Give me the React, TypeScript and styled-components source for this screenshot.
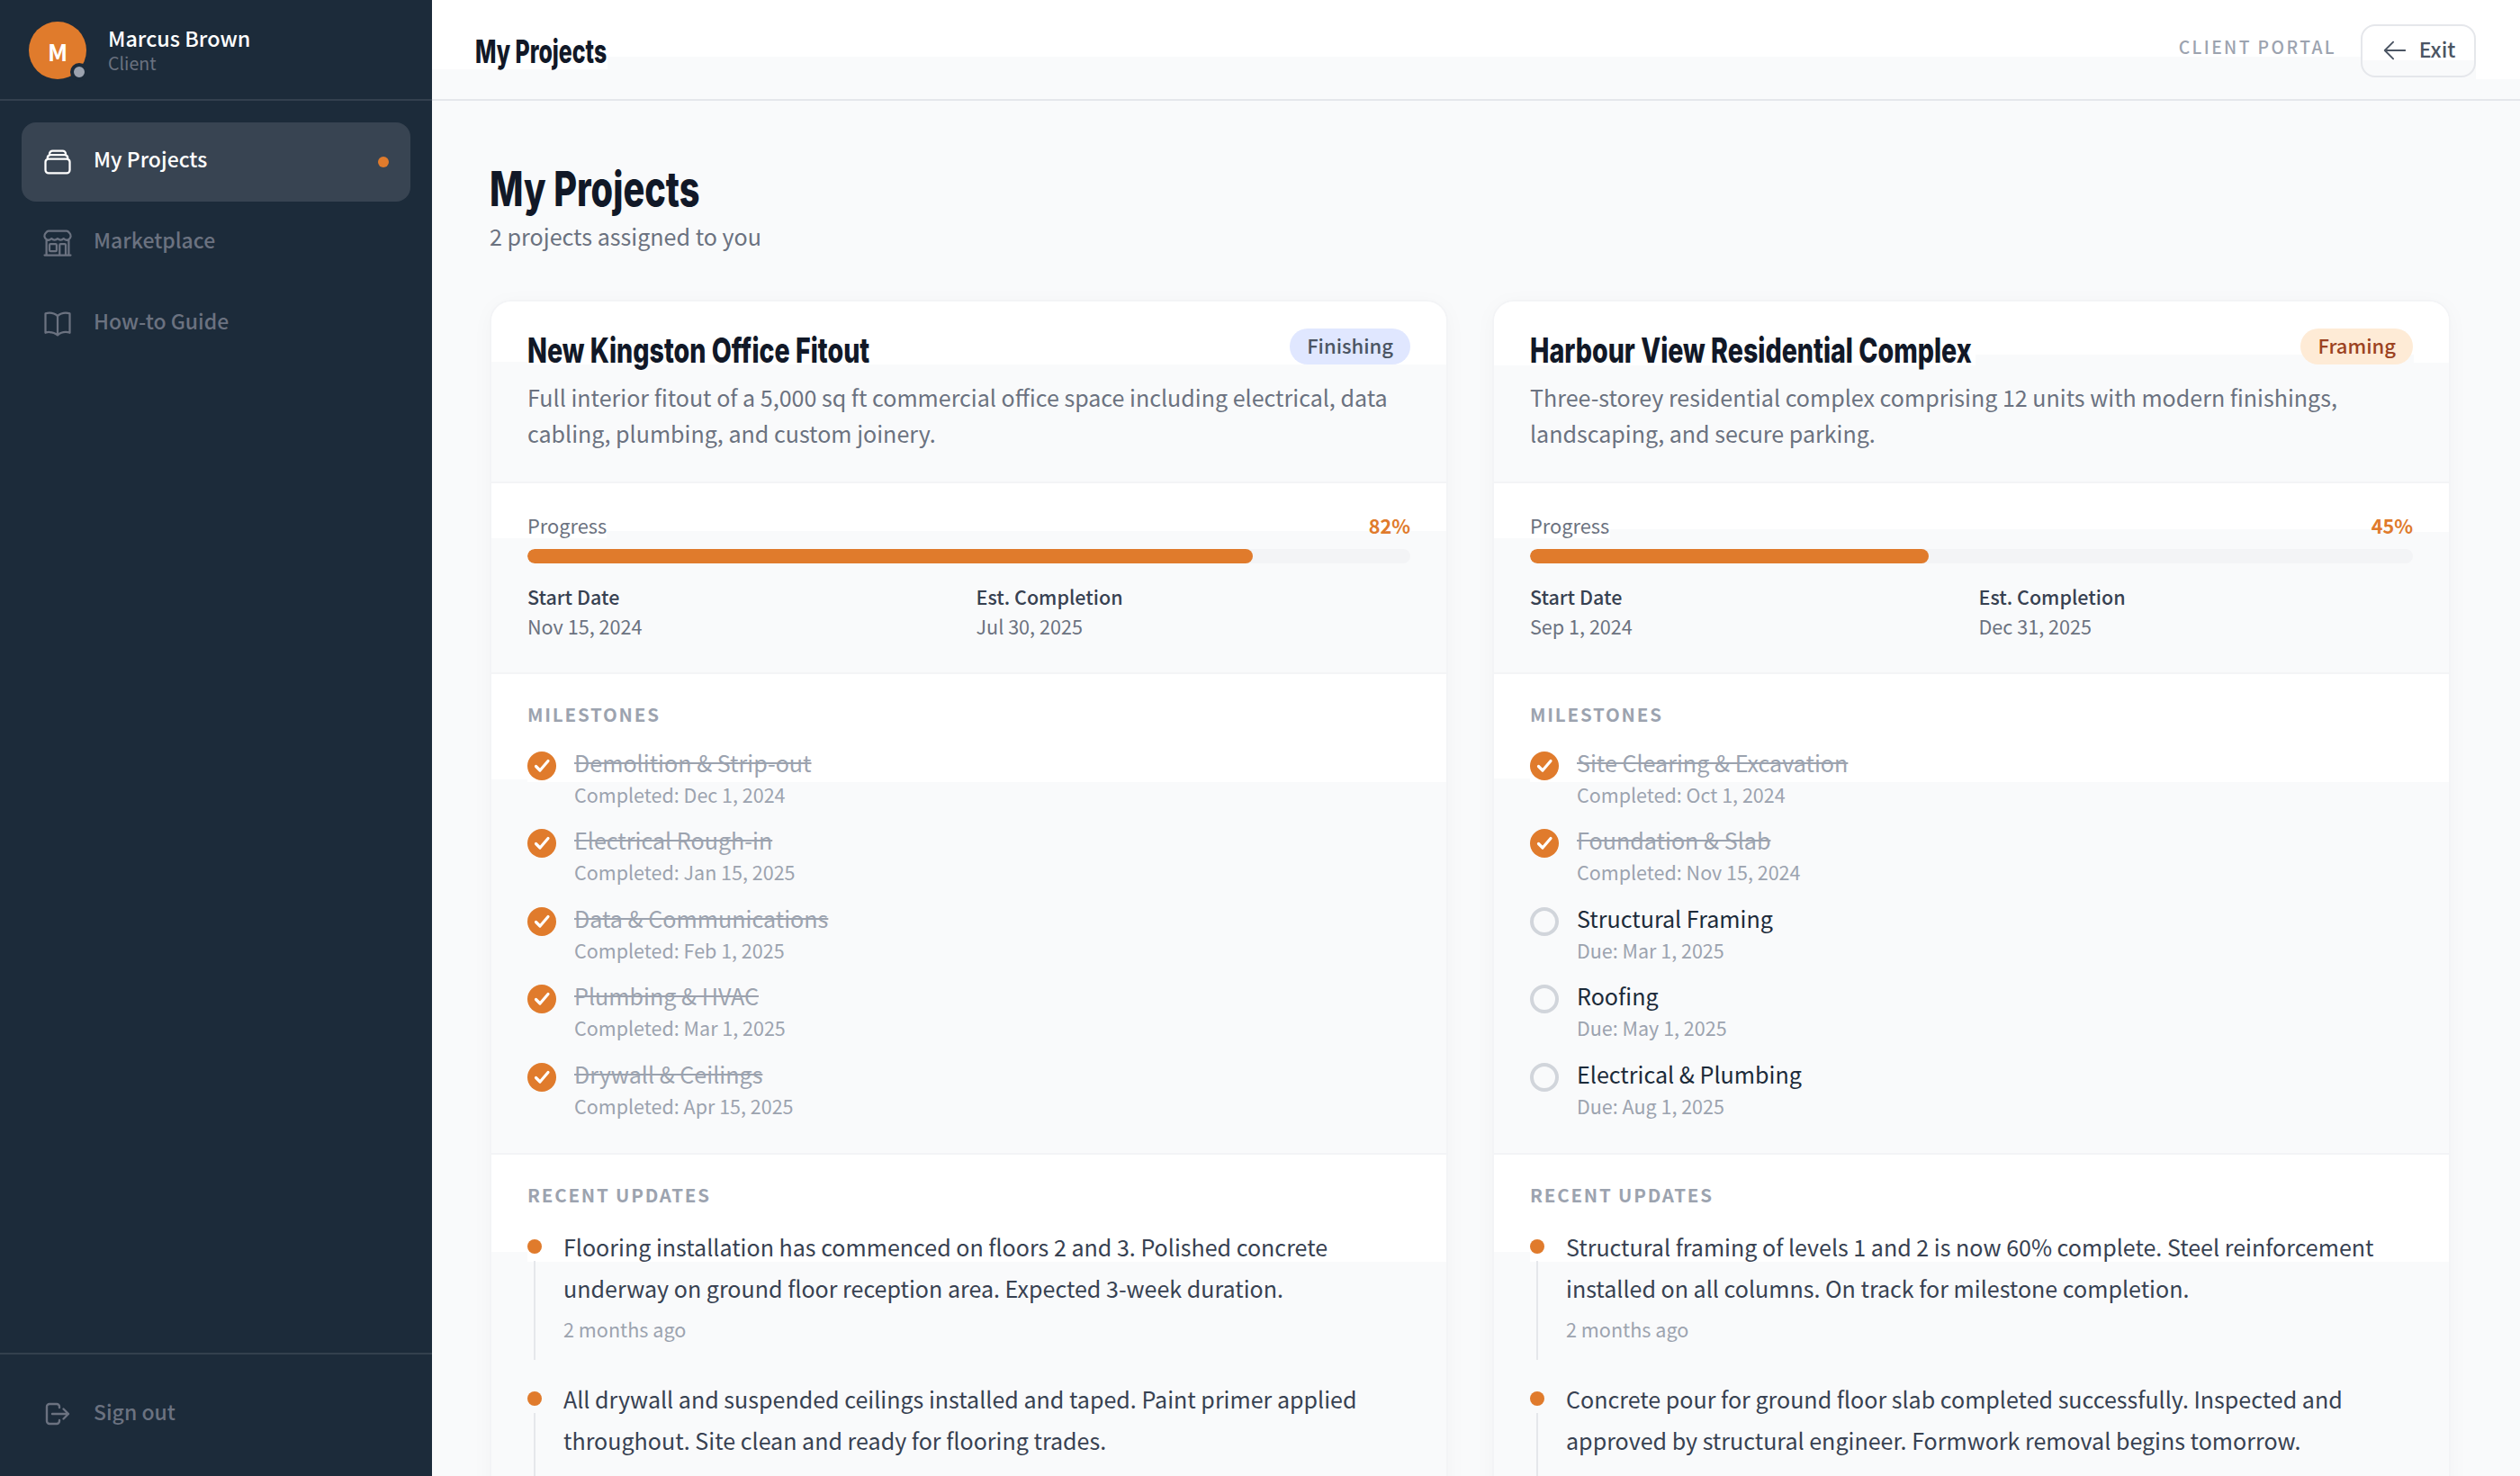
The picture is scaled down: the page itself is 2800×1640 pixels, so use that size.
import React from "react";
import styled, { createGlobalStyle } from "styled-components";
import {
  HiOutlineRectangleStack,
  HiOutlineBuildingStorefront,
  HiOutlineBookOpen,
  HiOutlineArrowLeft,
} from "react-icons/hi2";

// white part of a section, the rest shows the page grey: [left, width, height]
type Band = [number, string, number];

const bandBackground = (bands: Band[]) =>
  bands
    .map(([x, w, h]) => `linear-gradient(#fff, #fff) ${x}px 0 / ${w} ${h}px no-repeat`)
    .join(", ") + ", #f9fafb";

interface Milestone {
  name: string;
  note: string;
  done: boolean;
}

interface Project {
  title: string;
  desc: string;
  stage: string;
  stageBg: string;
  stageFg: string;
  progress: number;
  start: string;
  end: string;
  milestones: Milestone[];
  updates: { text: string; time?: string }[];
  bands: Band[][];
}

const projects: Project[] = [
  {
    title: "New Kingston Office Fitout",
    desc: "Full interior fitout of a 5,000 sq ft commercial office space including electrical, data cabling, plumbing, and custom joinery.",
    stage: "Finishing",
    stageBg: "#e0e7ff",
    stageFg: "#4b5563",
    progress: 82,
    start: "Nov 15, 2024",
    end: "Jul 30, 2025",
    milestones: [
      { name: "Demolition & Strip-out", note: "Completed: Dec 1, 2024", done: true },
      { name: "Electrical Rough-in", note: "Completed: Jan 15, 2025", done: true },
      { name: "Data & Communications", note: "Completed: Feb 1, 2025", done: true },
      { name: "Plumbing & HVAC", note: "Completed: Mar 1, 2025", done: true },
      { name: "Drywall & Ceilings", note: "Completed: Apr 15, 2025", done: true },
    ],
    updates: [
      {
        text: "Flooring installation has commenced on floors 2 and 3. Polished concrete underway on ground floor reception area. Expected 3-week duration.",
        time: "2 months ago",
      },
      {
        text: "All drywall and suspended ceilings installed and taped. Paint primer applied throughout. Site clean and ready for flooring trades.",
      },
    ],
    bands: [
      [[0, "40px", 67], [40, "100%", 70]],
      [[0, "128px", 61], [128, "100%", 53]],
      [[0, "40px", 117], [40, "100%", 120]],
      [[0, "40px", 108], [40, "100%", 119]],
    ],
  },
  {
    title: "Harbour View Residential Complex",
    desc: "Three-storey residential complex comprising 12 units with modern finishings, landscaping, and secure parking.",
    stage: "Framing",
    stageBg: "#feebd6",
    stageFg: "#9c4221",
    progress: 45,
    start: "Sep 1, 2024",
    end: "Dec 31, 2025",
    milestones: [
      { name: "Site Clearing & Excavation", note: "Completed: Oct 1, 2024", done: true },
      { name: "Foundation & Slab", note: "Completed: Nov 15, 2024", done: true },
      { name: "Structural Framing", note: "Due: Mar 1, 2025", done: false },
      { name: "Roofing", note: "Due: May 1, 2025", done: false },
      { name: "Electrical & Plumbing", note: "Due: Aug 1, 2025", done: false },
    ],
    updates: [
      {
        text: "Structural framing of levels 1 and 2 is now 60% complete. Steel reinforcement installed on all columns. On track for milestone completion.",
        time: "2 months ago",
      },
      {
        text: "Concrete pour for ground floor slab completed successfully. Inspected and approved by structural engineer. Formwork removal begins tomorrow.",
      },
    ],
    bands: [
      [[0, "535px", 71], [535, "100%", 59], [1022, "100%", 68]],
      [[0, "129px", 61], [129, "100%", 51], [1022, "100%", 54]],
      [[0, "40px", 116], [40, "100%", 120]],
      [[0, "40px", 108], [40, "100%", 119]],
    ],
  },
];

const navItems = [
  { label: "My Projects", icon: HiOutlineRectangleStack, active: true },
  { label: "Marketplace", icon: HiOutlineBuildingStorefront, active: false },
  { label: "How-to Guide", icon: HiOutlineBookOpen, active: false },
];

const headerBands: Band[] = [
  [0, "195px", 77],
  [195, "100%", 63],
  [2271, "100%", 88],
];

export default function App() {
  return (
    <>
      <GlobalStyle />
      <Shell>
        <Sidebar>
          <UserBlock>
            <Avatar>
              M
              <StatusDot />
            </Avatar>
            <UserText>
              <UserName>Marcus Brown</UserName>
              <UserRole>Client</UserRole>
            </UserText>
          </UserBlock>

          <Nav>
            {navItems.map(({ label, icon: Icon, active }) => (
              <NavItem key={label} $active={active}>
                <Icon size={36} />
                <NavLabel>{label}</NavLabel>
                {active && <NavDot />}
              </NavItem>
            ))}
          </Nav>

          <SignOut>
            <svg width="28" height="26" viewBox="0 0 28 26" fill="none" stroke="currentColor" strokeWidth="2.4" strokeLinecap="round" strokeLinejoin="round">
              <path d="M16 6V5a3 3 0 0 0-3-3H5a3 3 0 0 0-3 3v16a3 3 0 0 0 3 3h8a3 3 0 0 0 3-3v-1" />
              <path d="M8 13h18m-5.500-5.500 5.500 5.500-5.500 5.500" />
            </svg>
            <NavLabel>Sign out</NavLabel>
          </SignOut>
        </Sidebar>

        <Main>
          <TopBar style={{ background: bandBackground(headerBands) }}>
            <TopTitle>My Projects</TopTitle>
            <TopRight>
              <PortalTag>CLIENT PORTAL</PortalTag>
              <ExitButton>
                <HiOutlineArrowLeft size={30} />
                Exit
              </ExitButton>
            </TopRight>
          </TopBar>

          <Content>
            <PageTitle>My Projects</PageTitle>
            <PageSub>2 projects assigned to you</PageSub>

            <CardGrid>
              {projects.map((p) => (
                <Card key={p.title}>
                  <IntroSection style={{ background: bandBackground(p.bands[0]) }}>
                    <CardTop>
                      <CardTitle>{p.title}</CardTitle>
                      <StageBadge $bg={p.stageBg} $fg={p.stageFg}>{p.stage}</StageBadge>
                    </CardTop>
                    <CardDesc>{p.desc}</CardDesc>
                  </IntroSection>

                  <ProgressSection style={{ background: bandBackground(p.bands[1]) }}>
                    <ProgressHead>
                      <ProgressLabel>Progress</ProgressLabel>
                      <ProgressValue>{p.progress}%</ProgressValue>
                    </ProgressHead>
                    <BarTrack>
                      <BarFill style={{ width: `${p.progress + 0.2}%` }} />
                    </BarTrack>
                    <DateGrid>
                      <div>
                        <DateLabel>Start Date</DateLabel>
                        <DateValue>{p.start}</DateValue>
                      </div>
                      <div>
                        <DateLabel>Est. Completion</DateLabel>
                        <DateValue>{p.end}</DateValue>
                      </div>
                    </DateGrid>
                  </ProgressSection>

                  <MilestoneSection style={{ background: bandBackground(p.bands[2]) }}>
                    <SectionHeading>MILESTONES</SectionHeading>
                    <MilestoneList>
                      {p.milestones.map((m) => (
                        <MilestoneRow key={m.name}>
                          {m.done ? (
                            <svg width="32" height="32" viewBox="0 0 32 32">
                              <circle cx="16" cy="16" r="16" fill="#e07b2c" />
                              <path d="M9.500 16.500l4.500 4.500 9-10.500" fill="none" stroke="#fff" strokeWidth="3.200" strokeLinecap="round" strokeLinejoin="round" />
                            </svg>
                          ) : (
                            <EmptyRing />
                          )}
                          <div>
                            <MilestoneName $done={m.done}>{m.name}</MilestoneName>
                            <MilestoneNote>{m.note}</MilestoneNote>
                          </div>
                        </MilestoneRow>
                      ))}
                    </MilestoneList>
                  </MilestoneSection>

                  <UpdateSection style={{ background: bandBackground(p.bands[3]) }}>
                    <SectionHeading>RECENT UPDATES</SectionHeading>
                    <UpdateList>
                      {p.updates.map((u) => (
                        <UpdateItem key={u.text}>
                          <UpdateText>{u.text}</UpdateText>
                          {u.time && <UpdateTime>{u.time}</UpdateTime>}
                        </UpdateItem>
                      ))}
                    </UpdateList>
                  </UpdateSection>
                </Card>
              ))}
            </CardGrid>
          </Content>
        </Main>
      </Shell>
    </>
  );
}

const GlobalStyle = createGlobalStyle`
  html, body {
    margin: 0;
    padding: 0;
    background: #f9fafb;
    font-family: "Noto Sans CJK JP", "Noto Sans", sans-serif;
  }
  * {
    box-sizing: border-box;
  }
`;

const headingFont = `Inter, "Liberation Sans", sans-serif`;

const Shell = styled.div`
  display: flex;
  height: 1640px;
  overflow: hidden;
`;

const Sidebar = styled.aside`
  width: 480px;
  flex-shrink: 0;
  display: flex;
  flex-direction: column;
  background: #1c2b3a;
`;

const UserBlock = styled.div`
  height: 112px;
  display: flex;
  align-items: flex-start;
  gap: 24px;
  padding: 24px 32px 0;
  border-bottom: 2px solid rgba(255, 255, 255, 0.1);
`;

const Avatar = styled.div`
  position: relative;
  width: 64px;
  height: 64px;
  border-radius: 50%;
  background: #e07b2c;
  color: #fff;
  font-size: 26px;
  font-weight: 700;
  display: flex;
  align-items: center;
  justify-content: center;
`;

const StatusDot = styled.span`
  position: absolute;
  right: -2px;
  bottom: -2px;
  width: 20px;
  height: 20px;
  border-radius: 50%;
  background: #9ca3af;
  border: 4px solid #1c2b3a;
`;

const UserText = styled.div`
  display: flex;
  flex-direction: column;
`;

const UserName = styled.div`
  color: #fff;
  font-size: 23.400px;
  font-weight: 500;
  line-height: 36px;
`;

const UserRole = styled.div`
  margin-top: -5px;
  color: #6b7280;
  font-size: 19.600px;
  line-height: 30px;
`;

const Nav = styled.nav`
  flex: 1;
  display: flex;
  flex-direction: column;
  gap: 2px;
  padding: 24px 24px 0;
`;

const NavItem = styled.div<{ $active?: boolean }>`
  height: 88px;
  display: flex;
  align-items: center;
  gap: 22px;
  padding: 0 24px 0 22px;
  border-radius: 16px;
  background: ${(p) => (p.$active ? "#384452" : "transparent")};
  color: ${(p) => (p.$active ? "#fff" : "#6b7280")};
`;

const NavLabel = styled.span`
  font-size: 23px;
  font-weight: 500;
  line-height: 30px;
  position: relative;
  top: -4px;
`;

const NavDot = styled.span`
  width: 12px;
  height: 12px;
  margin-left: auto;
  border-radius: 50%;
  background: #e07b2c;
`;

const SignOut = styled.div`
  height: 137px;
  display: flex;
  align-items: center;
  gap: 26px;
  padding: 0 0 2px 50px;
  border-top: 2px solid rgba(255, 255, 255, 0.1);
  color: #6b7280;

  svg {
    position: relative;
    top: -1px;
  }
`;

const Main = styled.main`
  flex: 1;
  min-width: 0;
`;

const TopBar = styled.header`
  height: 112px;
  display: flex;
  justify-content: space-between;
  padding: 27px 49px 0 48px;
  border-bottom: 2px solid #e5e7eb;
`;

// the heading face is far narrower than any installed family
const TopTitle = styled.h2`
  margin: 0;
  font-family: ${headingFont};
  font-size: 36px;
  font-weight: 800;
  line-height: 60px;
  color: #111827;
  transform: scaleX(0.69);
  transform-origin: left;
`;

const TopRight = styled.div`
  display: flex;
  align-items: flex-start;
  gap: 27px;
`;

const PortalTag = styled.span`
  font-size: 19.300px;
  font-weight: 500;
  letter-spacing: 2.400px;
  line-height: 50px;
  color: #9ca3af;
`;

const ExitButton = styled.button`
  width: 128px;
  height: 59px;
  display: flex;
  align-items: center;
  justify-content: center;
  gap: 12px;
  padding: 0 0 5px;
  border: 2px solid #e5e7eb;
  border-radius: 16px;
  background: linear-gradient(#fff 38px, #f9fafb 38px);
  font-family: inherit;
  font-size: 23px;
  font-weight: 500;
  color: #4b5563;

  svg {
    position: relative;
    top: 2px;
  }
`;

const Content = styled.div`
  padding: 66px 77px 0 64px;
`;

const PageTitle = styled.h1`
  margin: 0;
  font-family: ${headingFont};
  font-size: 54px;
  font-weight: 800;
  line-height: 64px;
  color: #111827;
  transform: scaleX(0.735);
  transform-origin: left;
`;

const PageSub = styled.p`
  margin: 0;
  font-size: 25.100px;
  line-height: 40px;
  color: #6b7280;
`;

const CardGrid = styled.div`
  display: grid;
  grid-template-columns: 1fr 1fr;
  gap: 49px;
  margin-top: 51px;
`;

const Card = styled.article`
  border: 2px solid #f3f4f6;
  border-radius: 24px;
  overflow: hidden;
  box-shadow: 0 4px 24px rgba(0, 0, 0, 0.03);
`;

const IntroSection = styled.section`
  padding: 30px 40px 34px;
  border-bottom: 2px solid #f3f4f6;
`;

const CardTop = styled.div`
  display: flex;
  justify-content: space-between;
  align-items: flex-start;
`;

const CardTitle = styled.h3`
  margin: 0;
  font-family: ${headingFont};
  font-size: 38px;
  font-weight: 800;
  line-height: 48px;
  color: #111827;
  transform: scaleX(0.753);
  transform-origin: left;
  white-space: nowrap;
`;

const StageBadge = styled.span<{ $bg: string; $fg: string }>`
  height: 40px;
  padding: 0 19px;
  border-radius: 20px;
  background: ${(p) => p.$bg};
  color: ${(p) => p.$fg};
  font-size: 22px;
  font-weight: 500;
  line-height: 36px;
`;

const CardDesc = styled.p`
  margin: 8px 0 0;
  font-size: 25.050px;
  line-height: 40px;
  color: #6b7280;
`;

const ProgressSection = styled.section`
  padding: 31px 40px 36px;
  border-bottom: 2px solid #f3f4f6;
`;

const ProgressHead = styled.div`
  display: flex;
  justify-content: space-between;
  line-height: 32px;
`;

const ProgressLabel = styled.span`
  font-size: 21.800px;
  color: #6b7280;
`;

const ProgressValue = styled.span`
  font-size: 21.600px;
  font-weight: 700;
  color: #e07b2c;
`;

const BarTrack = styled.div`
  height: 16px;
  margin-top: 10px;
  border-radius: 8px;
  background: #f3f4f6;
  overflow: hidden;
`;

const BarFill = styled.div`
  height: 100%;
  border-radius: 8px;
  background: #e07b2c;
`;

const DateGrid = styled.div`
  display: grid;
  grid-template-columns: 1fr 1fr;
  gap: 16px;
  margin-top: 22px;
`;

const DateLabel = styled.div`
  font-size: 21.500px;
  font-weight: 500;
  line-height: 30px;
  color: #374151;
`;

const DateValue = styled.div`
  margin-top: 3px;
  font-size: 21.600px;
  line-height: 30px;
  color: #6b7280;
`;

const MilestoneSection = styled.section`
  padding: 29px 40px 38px;
  border-bottom: 2px solid #f3f4f6;
`;

const SectionHeading = styled.h4`
  margin: 0;
  font-size: 20.500px;
  font-weight: 700;
  letter-spacing: 1.800px;
  line-height: 30px;
  color: #9ca3af;
`;

const MilestoneList = styled.div`
  display: flex;
  flex-direction: column;
  gap: 18.400px;
  margin-top: 21px;
`;

const MilestoneRow = styled.div`
  display: flex;
  align-items: flex-start;
  gap: 20px;
  height: 69px;
  margin-bottom: -1px;

  > svg {
    flex-shrink: 0;
    margin-top: 6px;
  }
`;

const EmptyRing = styled.span`
  flex-shrink: 0;
  width: 32px;
  height: 32px;
  margin-top: 6px;
  border-radius: 50%;
  border: 4px solid #d1d5db;
`;

const MilestoneName = styled.div<{ $done: boolean }>`
  font-size: 25.100px;
  line-height: 36px;
  color: ${(p) => (p.$done ? "#9ca3af" : "#1c2b3a")};
  text-decoration: ${(p) => (p.$done ? "line-through" : "none")};
`;

const MilestoneNote = styled.div`
  margin-top: 3px;
  font-size: 21.500px;
  line-height: 30px;
  color: #9ca3af;
`;

const UpdateSection = styled.section`
  padding: 29px 40px 0;
`;

const UpdateList = styled.div`
  margin-top: 21px;
`;

const UpdateItem = styled.div`
  position: relative;
  height: 170px;
  padding-left: 40px;

  &::before {
    content: "";
    position: absolute;
    left: 0;
    top: 15px;
    width: 16px;
    height: 16px;
    border-radius: 50%;
    background: #e07b2c;
  }

  &::after {
    content: "";
    position: absolute;
    left: 7px;
    top: 39px;
    width: 2px;
    height: 110px;
    background: #e5e7eb;
  }
`;

const UpdateText = styled.p`
  margin: -1px 0 0;
  font-size: 25.050px;
  line-height: 46px;
  color: #374151;
`;

const UpdateTime = styled.div`
  margin-top: 8px;
  font-size: 21.600px;
  line-height: 30px;
  color: #9ca3af;
`;
